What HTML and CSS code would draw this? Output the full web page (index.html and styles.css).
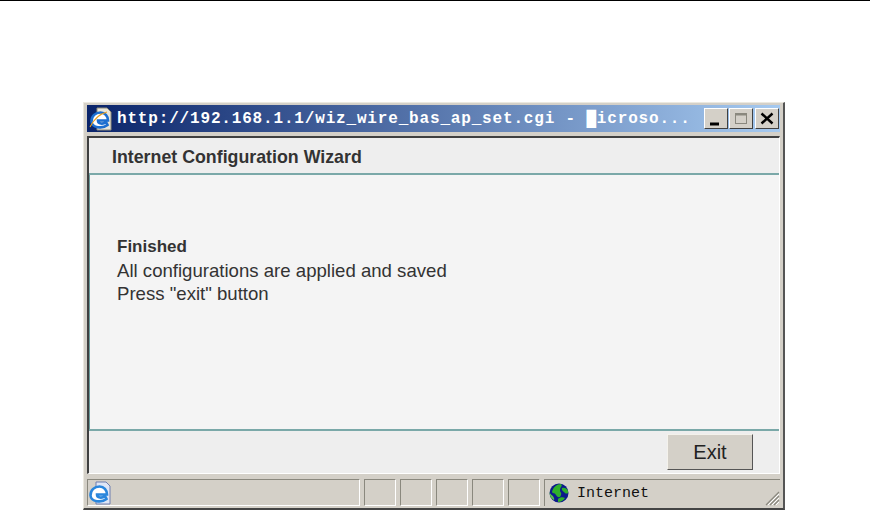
FILE: index.html
```html
<!DOCTYPE html>
<html lang="en">
<head>
  <meta charset="UTF-8" />
  <meta name="viewport" content="width=device-width, initial-scale=1.0"/>
  <title>Internet Configuration Wizard</title>
  <link rel="stylesheet" href="styles.css">
</head>
<body>
  <div class="top-rule"></div>

  <div class="window">
    <div class="title-bar">
      <svg class="ie-icon" viewBox="0 0 24 24" width="24" height="24">
        <path d="M8 1h10l4 4v18H8z" fill="#e8e6da" stroke="#8d8a78"/>
        <path d="M2.500 14.500c0-5.500 4-9 9-9 4.500 0 7.500 3.500 7.500 8H9c0 3.500 5 4 8 1.500l1.500 3c-5 4-15.500 3-16-3.500z" fill="#fff" stroke="#1c6fd0" stroke-width="2.600"/>
        <path d="M1 20c3-6 9-13 17-15" fill="none" stroke="#e8a020" stroke-width="1.200"/>
      </svg>
      <span class="title-text">http://192.168.1.1/wiz_wire_bas_ap_set.cgi - █icroso...</span>
      <div class="win-buttons">
        <button class="win-btn">
          <svg viewBox="0 0 18 18" width="18" height="18"><rect x="3" y="12.500" width="9" height="3" fill="#000"/></svg>
        </button>
        <button class="win-btn">
          <svg viewBox="0 0 18 18" width="18" height="18"><rect x="3.500" y="3.500" width="11" height="10" fill="none" stroke="#8a887e"/><rect x="3.500" y="3.500" width="11" height="2" fill="#8a887e"/></svg>
        </button>
        <button class="win-btn close-btn">
          <svg viewBox="0 0 18 18" width="18" height="18"><path d="M3.500 3.500l11 10M14.500 3.500l-11 10" stroke="#000" stroke-width="2.400"/></svg>
        </button>
      </div>
    </div>

    <div class="client">
      <div class="wizard-header">Internet Configuration Wizard</div>
      <div class="wizard-body">
        <p class="finished">Finished</p>
        <p>All configurations are applied and saved</p>
        <p>Press "exit" button</p>
      </div>
      <div class="wizard-footer">
        <button class="exit-btn">Exit</button>
      </div>
    </div>

    <div class="status-bar">
      <div class="cell cell-main">
        <svg class="ie-icon" viewBox="0 0 24 24" width="24" height="24">
          <path d="M8 1h10l4 4v18H8z" fill="#dfe6f6" stroke="#6f7fb0"/>
          <path d="M2.500 14.500c0-5.500 4-9 9-9 4.500 0 7.500 3.500 7.500 8H9c0 3.500 5 4 8 1.500l1.500 3c-5 4-15.500 3-16-3.500z" fill="#fff" stroke="#2a86dc" stroke-width="2.600"/>
        </svg>
      </div>
      <div class="cell cell-small"></div>
      <div class="cell cell-small"></div>
      <div class="cell cell-small"></div>
      <div class="cell cell-small"></div>
      <div class="cell cell-small"></div>
      <div class="cell cell-zone">
        <svg class="globe" viewBox="0 0 20 20" width="20" height="20">
          <circle cx="10" cy="10" r="9.500" fill="#0c1a8c"/>
          <path d="M3 9c1-5 5-8 9-8 2 2-1 3-1 6s2 2 1 5-3 3-5 0-3-1-4-3zM13 5c2-1 5 0 6 3 1 3-2 3-3 2s-4-3-3-5zM9 16c2-2 5-2 7-1-1 2-4 4-7 4z" fill="#2fb02a"/>
          <path d="M0.500 9c1 3 3 3 4 5s1 3 0 3c-3-2-4-5-4-8z" fill="#58c048"/>
        </svg>
        <span class="zone-text">Internet</span>
        <svg class="grip" viewBox="0 0 16 16" width="16" height="16">
          <path d="M15 2L2 15M15 6L6 15M15 10L10 15" stroke="#8a887e" stroke-width="1.200"/>
          <path d="M15 4L4 15M15 8L8 15M15 12L12 15" stroke="#fff" stroke-width="1"/>
        </svg>
      </div>
    </div>
  </div>
</body>
</html>
```

FILE: styles.css
```css
body {
  margin: 0;
  background: #fff;
  font-family: 'Liberation Sans', Arial, sans-serif;
  overflow: hidden;
}

.top-rule {
  height: 1px;
  background: #000;
  margin-bottom: 101px;
}

.window {
  width: 693px;
  height: 401px;
  margin-left: 83px;
  padding: 2px 3px 2px 3px;
  background: #d4d0c8;
  border-top: 1px solid #ece9e0;
  border-left: 1px solid #ece9e0;
  border-right: 2px solid #555;
  border-bottom: 2px solid #444;
  display: flex;
  flex-direction: column;
}

.title-bar {
  height: 27px;
  flex-shrink: 0;
  display: flex;
  align-items: center;
  padding: 0 1px 0 2px;
  background: linear-gradient(to right, #0a246a, #a6caf0);
}

.ie-icon {
  flex-shrink: 0;
}

.title-text {
  margin-left: 4px;
  font-family: 'Liberation Mono', monospace;
  font-weight: bold;
  font-size: 16px;
  letter-spacing: 0.83px;
  color: #fff;
  white-space: nowrap;
}

.win-buttons {
  margin-left: auto;
  display: flex;
}

.win-btn {
  width: 24px;
  height: 21px;
  padding: 0;
  margin-left: 1px;
  background: #d4d0c8;
  border: 1px solid;
  border-color: #fff #404040 #404040 #fff;
  display: flex;
  align-items: center;
  justify-content: center;
}

.close-btn {
  margin-left: 2px;
}

.client {
  flex: 1;
  margin-top: 4px;
  display: flex;
  flex-direction: column;
  background: #f4f4f4;
  border-top: 2px solid #404040;
  border-left: 2px solid #404040;
  border-right: 1px solid #fff;
  border-bottom: 1px solid #fff;
  box-shadow: inset 1px 1px 0 #6a9a9a;
}

.wizard-header {
  height: 32px;
  display: flex;
  align-items: center;
  padding: 3px 0 0 23px;
  background: #eeeeee;
  border-bottom: 2px solid #7aa8a8;
  font-size: 17.800px;
  font-weight: bold;
  color: #333;
}

.wizard-body {
  flex: 1;
  padding: 60px 0 0 28px;
  font-size: 18.600px;
  line-height: 23.500px;
  color: #333;
}

.wizard-body p {
  margin: 0;
}

.wizard-body .finished {
  font-size: 17px;
  font-weight: bold;
}

.wizard-footer {
  height: 42px;
  display: flex;
  align-items: center;
  justify-content: flex-end;
  padding-right: 26px;
  background: #eeeeee;
  border-top: 2px solid #7aa8a8;
}

.exit-btn {
  width: 86px;
  height: 36px;
  padding: 0;
  font-family: 'Liberation Sans', Arial, sans-serif;
  font-size: 20px;
  color: #222;
  background: #d4d0c8;
  border: 1px solid;
  border-color: #f4f2ec #555 #555 #f4f2ec;
}

.status-bar {
  height: 27px;
  flex-shrink: 0;
  margin-top: 5px;
  display: flex;
  gap: 4px;
}

.cell {
  border: 1px solid;
  border-color: #8a887e #fff #fff #8a887e;
  display: flex;
  align-items: center;
}

.cell-main {
  width: 271px;
  flex-shrink: 0;
}

.cell-small {
  width: 30px;
  flex-shrink: 0;
}

.cell-zone {
  flex: 1;
  position: relative;
  padding-left: 4px;
  border-right: none;
  border-bottom: none;
}

.zone-text {
  margin-left: 8px;
  font-family: 'Liberation Mono', monospace;
  font-size: 15px;
  color: #111;
}

.grip {
  position: absolute;
  right: 0;
  bottom: 0;
}
```
